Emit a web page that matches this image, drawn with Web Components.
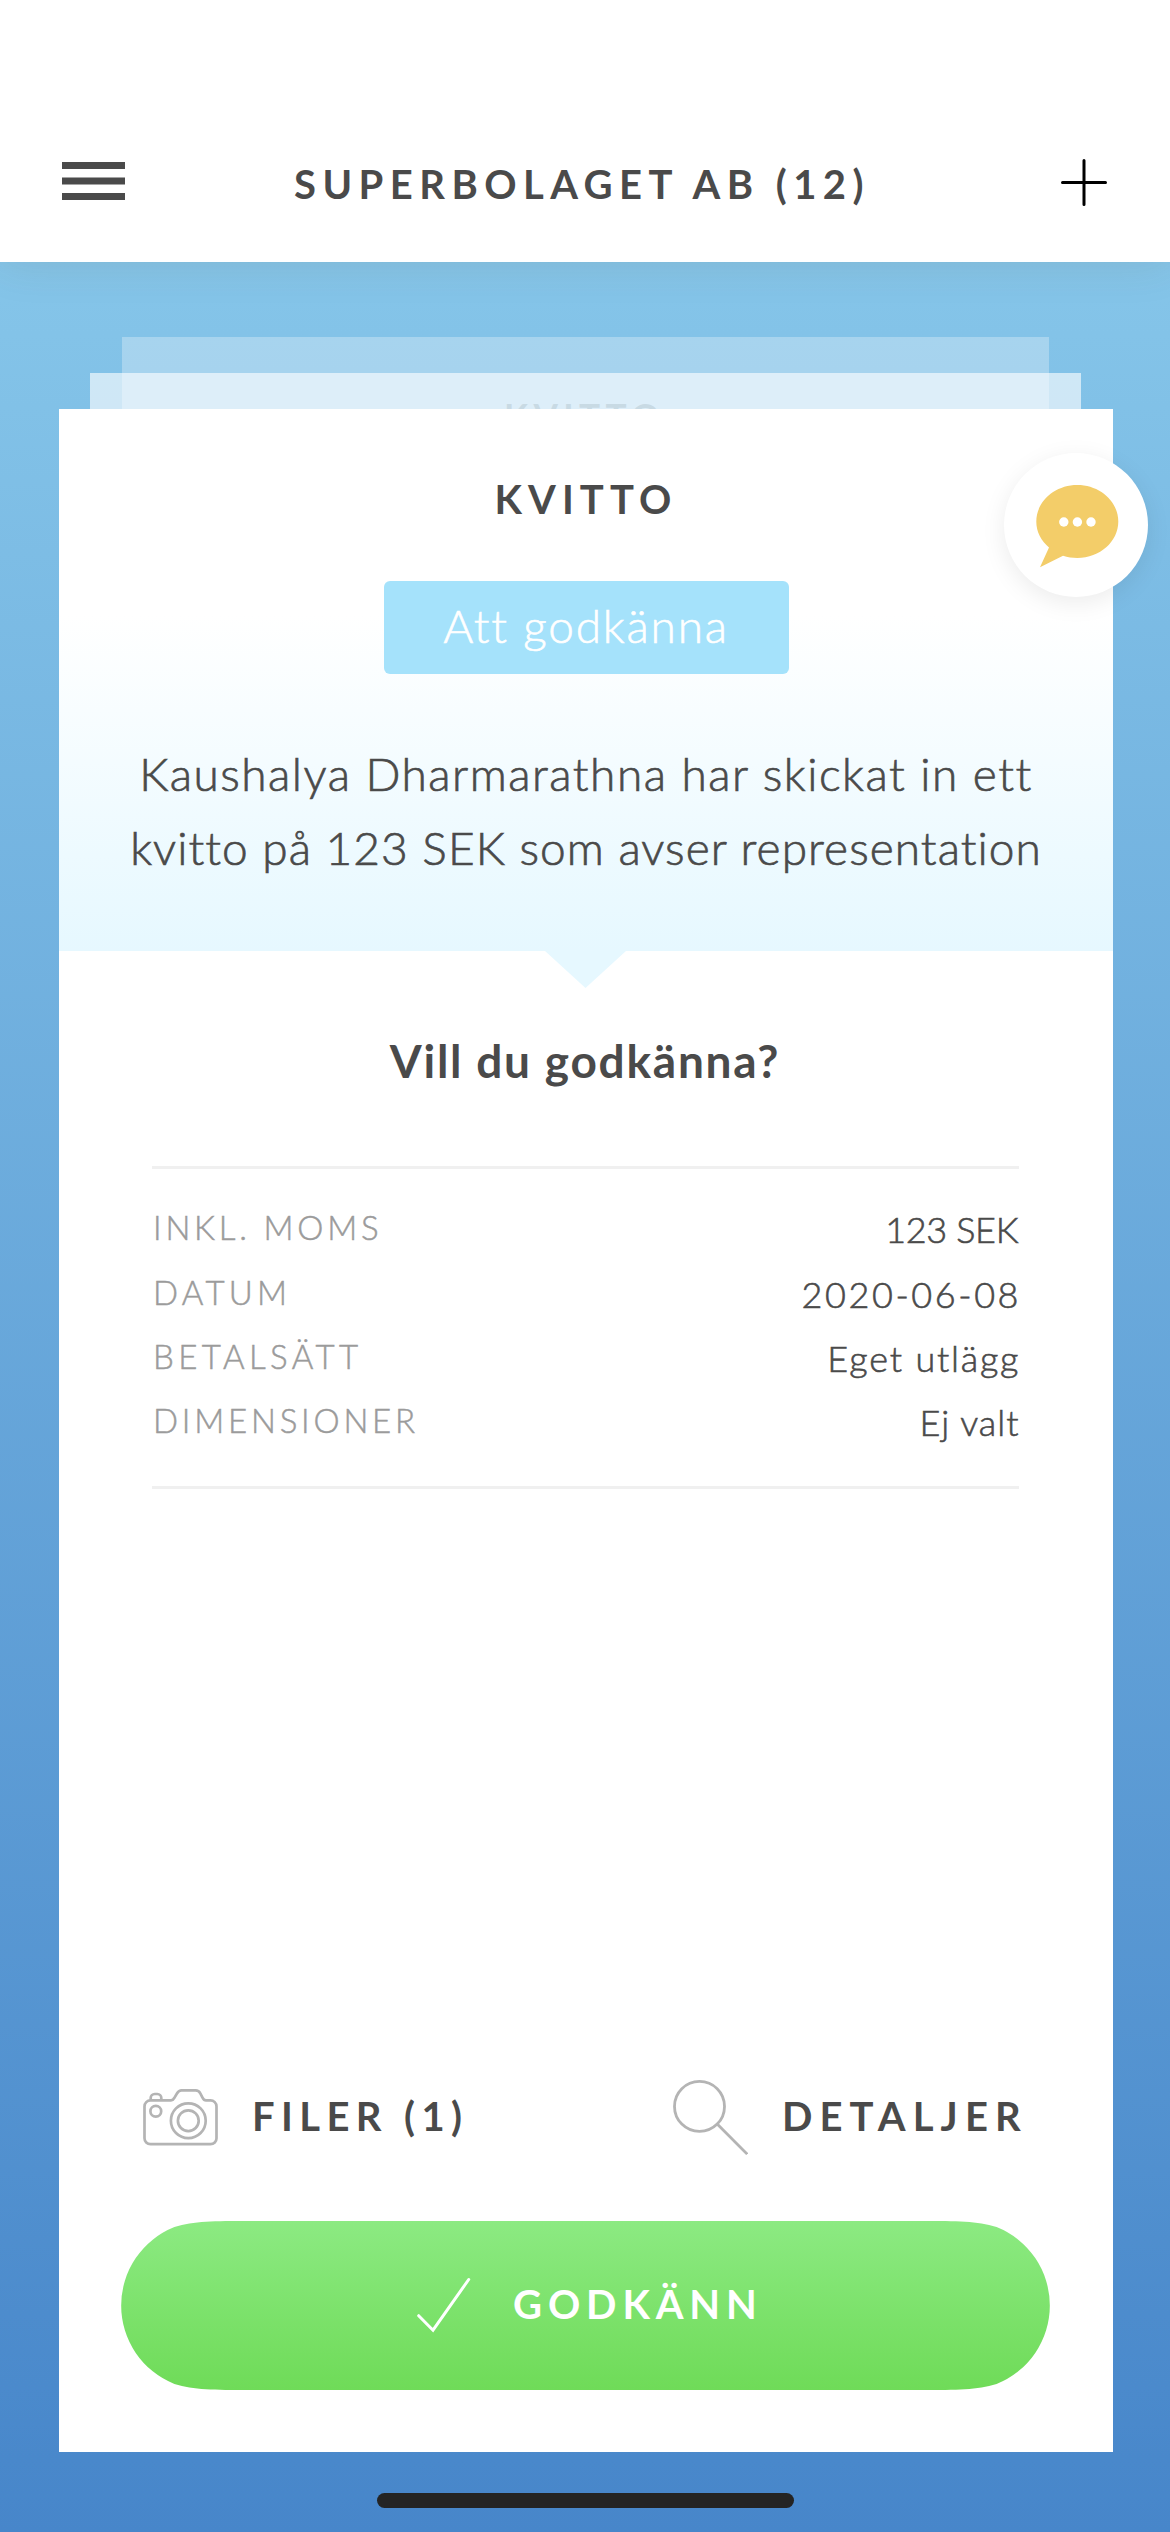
<!DOCTYPE html>
<html lang="sv">
<head>
<meta charset="utf-8">
<title>Superbolaget AB</title>
<style>
  body { margin: 0; font-family: Lato, "Open Sans", sans-serif; color: #4a4a4a; }
</style>
</head>
<body>
<receipt-app></receipt-app>

<script>
const define = (name, html) => {
  const template = document.createElement('template');
  template.innerHTML = html;
  customElements.define(name, class extends HTMLElement {
    constructor() {
      super();
      this.attachShadow({ mode: 'open' }).append(template.content.cloneNode(true));
    }
  });
};

define('app-header', `
  <style>
    :host { display: grid; grid-template-columns: 1fr auto 1fr; align-items: center; box-sizing: border-box;
      height: 262px; padding: 104px 63px 0 62px; background: #fff; position: relative; z-index: 1;
      box-shadow: 0 0 42px rgba(90, 70, 50, .13); }
    h1 { margin: 1px 5px 0 0; font-size: 40px; line-height: 48px; font-weight: 700; letter-spacing: 6.45px; white-space: nowrap; }
    svg { display: block; }
    .menu { margin-bottom: 4px; }
    .add { justify-self: end; margin-bottom: 1px; }
  </style>
  <svg class="menu" width="63" height="38" viewBox="0 0 63 38" fill="#4a4a4a">
    <path d="M0 0h63v7H0zM0 15.500h63v7H0zM0 31h63v7H0z"/>
  </svg>
  <h1><slot></slot></h1>
  <svg class="add" width="46" height="47" viewBox="0 0 46 47" stroke="#000" stroke-width="3" stroke-linecap="round">
    <path d="M1.500 23.500h43M23 1.500v44"/>
  </svg>`);

define('status-pill', `
  <style>
    :host { display: flex; align-items: center; justify-content: center; box-sizing: border-box; width: 405px; height: 93px;
      padding-bottom: 4px; border-radius: 6px; background: #a5e2fb; color: #fff;
      font-size: 46px; font-weight: 300; letter-spacing: 1.8px; white-space: nowrap; -webkit-text-stroke: .6px #fff; }
  </style>
  <span><slot></slot></span>`);

define('card-summary', `
  <style>
    :host { display: flex; flex-direction: column; align-items: center; box-sizing: border-box; height: 542px; padding-top: 66px;
      background: linear-gradient(#fff 38%, #e6f8ff); position: relative; }
    :host::after { content: ""; position: absolute; top: 100%; left: 486px; width: 81px; height: 37px;
      background: #e6f8ff; clip-path: polygon(0 0, 100% 0, 50% 100%); }
    h2 { margin: 0 0 58px; font-size: 40px; line-height: 48px; font-weight: 700; letter-spacing: 6.08px; }
    p { margin: 63px 0 0; display: flex; flex-direction: column; align-items: center; font-size: 46px; line-height: 74px;
      font-weight: 300; white-space: nowrap; -webkit-text-stroke: .7px #4a4a4a; }
    .first { letter-spacing: 1.5px; }
    .second { letter-spacing: 1.05px; }
  </style>
  <h2><slot name="title"></slot></h2>
  <slot name="status"></slot>
  <p><span class="first"><slot name="line-1"></slot></span><span class="second"><slot name="line-2"></slot></span></p>`);

define('detail-row', `
  <style>
    :host { display: flex; justify-content: space-between; align-items: center; height: 64.400px; }
    .label { font-size: 33px; line-height: 40px; font-weight: 300; color: #9b9b9b; padding: 0 0 4px 1px;
      letter-spacing: var(--label-spacing, 3.8px); -webkit-text-stroke: .5px #9b9b9b; }
    .value { font-size: 36px; line-height: 44px; font-weight: 300; letter-spacing: var(--value-spacing, 1px);
      margin-right: calc(.5px - var(--value-spacing, 1px)); -webkit-text-stroke: .6px #4a4a4a; }
  </style>
  <span class="label"><slot name="label"></slot></span>
  <span class="value"><slot></slot></span>`);

define('detail-list', `
  <style>
    :host { display: block; box-sizing: border-box; height: 323px; margin: 78px 94px 0 93px; padding-top: 28px;
      border-top: 3px solid #f0f0f0; border-bottom: 3px solid #f0f0f0; }
  </style>
  <slot></slot>`);

define('action-link', `
  <style>
    :host { display: flex; align-items: center; font-size: 40px; line-height: 48px; font-weight: 700;
      letter-spacing: var(--spacing, 6.4px); white-space: nowrap; }
    span { margin: 0 0 3px 34px; }
  </style>
  <slot name="icon"></slot><span><slot></slot></span>`);

define('camera-icon', `
  <style>:host { display: block; height: 76px; } svg { display: block; }</style>
  <svg width="75" height="76" viewBox="0 0 75 76" fill="none" stroke="#b4b4b4" stroke-width="2.700">
    <path d="M7.500 21.400H28c2 0 2.600-1.200 3.500-2.800l2.600-4.300c1.200-2 2.300-2.900 4.500-2.900h14c2.400 0 3.700 1 4.700 2.900l2.200 4.300c.9 1.800 1.500 2.800 3.500 2.800h4.500a6 6 0 0 1 6 6v31.800a6 6 0 0 1-6 6h-60a6 6 0 0 1-6-6V27.400a6 6 0 0 1 6-6z"/>
    <path d="M7.700 21v-2a4 4 0 0 1 4-4h2.600a4 4 0 0 1 4 4v2"/>
    <circle cx="12.800" cy="32.300" r="5.400"/>
    <circle cx="45.300" cy="41.700" r="17.400"/>
    <circle cx="45.300" cy="41.700" r="10.400"/>
  </svg>`);

define('search-icon', `
  <style>:host { display: block; height: 76px; } svg { display: block; }</style>
  <svg width="75" height="76" viewBox="0 0 75 76" fill="none" stroke="#b4b4b4" stroke-width="2.800">
    <circle cx="26.500" cy="27.400" r="25"/>
    <path d="M44.200 45.100l30 30"/>
  </svg>`);

define('approve-button', `
  <style>
    :host { display: grid; width: 929px; height: 169px; margin-left: 62px; }
    svg, .content { grid-area: 1 / 1; }
    .content { display: flex; align-items: center; gap: 42px; padding-left: 296px; color: #fff; font-size: 40px;
      line-height: 48px; font-weight: 700; letter-spacing: 5.87px; }
    .check { margin-bottom: 2px; }
    span { margin-bottom: 4px; }
  </style>
  <svg width="929" height="169" viewBox="0 0 929 169">
    <defs><linearGradient id="g" x1="0" y1="0" x2="0" y2="1"><stop offset="0" stop-color="#8cea82"/><stop offset="1" stop-color="#6fdb58"/></linearGradient></defs>
    <path fill="url(#g)" d="M129 0H800C837 0 855.600 0 875.600 6A84.500 84.500 0 0 1 875.600 163C855.600 169 837 169 800 169H129C92 169 73.400 169 53.400 163A84.500 84.500 0 0 1 53.400 6C73.400 0 92 0 129 0Z"/>
  </svg>
  <div class="content">
    <svg class="check" width="54" height="56" viewBox="0 0 54 56" fill="none" stroke="#fff" stroke-width="3" stroke-linecap="round">
      <path d="M1.700 38.700l14.300 14.500L51.700 2.500"/>
    </svg>
    <span><slot></slot></span>
  </div>`);

define('receipt-card', `
  <style>
    :host { display: flex; flex-direction: column; box-sizing: border-box; height: 2043px; background: #fff; padding-bottom: 62px; }
    h3 { margin: 83px 2px 0 0; font-size: 46px; line-height: 54px; font-weight: 700; letter-spacing: 1.76px; text-align: center; }
    .actions { display: grid; grid-template-columns: 530px auto; margin: auto 0 66px 84px; }
  </style>
  <slot name="summary"></slot>
  <h3><slot name="question"></slot></h3>
  <slot></slot>
  <div class="actions"><slot name="action"></slot></div>
  <slot name="button"></slot>`);

define('queued-card', `
  <style>
    :host { display: block; box-sizing: border-box; align-self: start; overflow: hidden; background: #fff; text-align: center;
      font-size: 35.200px; line-height: 42px; font-weight: 700; letter-spacing: 5.350px; padding: 57px 2px 0 0; }
  </style>
  <slot></slot>`);

define('chat-bubble', `
  <style>
    :host { display: block; position: absolute; left: 1003.500px; top: 453px; width: 144px; height: 144px; border-radius: 50%;
      background: #fff; box-shadow: 0 6px 24px rgba(0, 0, 0, .08); z-index: 2; }
    svg { display: block; }
  </style>
  <svg width="144" height="144" viewBox="0 0 144 144">
    <path fill="#f3cd69" d="M73.300 32C96 32 114.300 48.500 114.300 68.600S96 105 73.300 105C68.500 105 63.600 104.300 59 102.800L36 114.200L45 94.500C37 88 32.300 78.800 32.300 68.600C32.300 48.500 50.600 32 73.300 32Z"/>
    <g fill="#fff"><circle cx="59.800" cy="69" r="4.700"/><circle cx="73.400" cy="69" r="4.700"/><circle cx="87" cy="69" r="4.700"/></g>
  </svg>`);

define('home-indicator', `
  <style>:host { display: block; width: 417px; height: 15px; border-radius: 7.500px; background: #242424; margin: 41px 0 0 377px; }</style>`);

define('receipt-app', `
  <style>
    :host { display: block; position: relative; height: 2532px; overflow: hidden; }
    main { display: grid; height: 2190px; }
    .backdrop { height: 2270px; background: linear-gradient(#85c5e9, #4786ca); }
    main > * { grid-area: 1 / 1; }
    .third { margin: 75px 121px 0 122px; height: 120px; opacity: .29; }
    .second { margin: 111px 89px 0 90px; height: 80px; opacity: .62; }
    .front { margin: 147px 57px 0 59px; z-index: 1; }
  </style>
  <app-header>SUPERBOLAGET AB (12)</app-header>
  <div class="backdrop">
    <main>
      <queued-card class="third">KVITTO</queued-card>
      <queued-card class="second"></queued-card>
      <receipt-card class="front">
        <card-summary slot="summary">
          <span slot="title">KVITTO</span>
          <status-pill slot="status">Att godkänna</status-pill>
          <span slot="line-1">Kaushalya Dharmarathna har skickat in ett</span>
          <span slot="line-2">kvitto på 123 SEK som avser representation</span>
        </card-summary>
        <span slot="question">Vill du godkänna?</span>
        <detail-list>
          <detail-row style="--label-spacing:3.79px;--value-spacing:-.34px"><span slot="label">INKL. MOMS</span>123 SEK</detail-row>
          <detail-row style="--label-spacing:4.26px;--value-spacing:2.58px"><span slot="label">DATUM</span>2020-06-08</detail-row>
          <detail-row style="--label-spacing:4.39px;--value-spacing:1.79px"><span slot="label">BETALSÄTT</span>Eget utlägg</detail-row>
          <detail-row style="--label-spacing:3.79px;--value-spacing:.98px"><span slot="label">DIMENSIONER</span>Ej valt</detail-row>
        </detail-list>
        <action-link slot="action" style="--spacing:6.39px"><camera-icon slot="icon"></camera-icon>FILER (1)</action-link>
        <action-link slot="action" style="--spacing:7.09px"><search-icon slot="icon"></search-icon>DETALJER</action-link>
        <approve-button slot="button">GODKÄNN</approve-button>
      </receipt-card>
    </main>
    <home-indicator></home-indicator>
  </div>
  <chat-bubble></chat-bubble>`);
</script>
</body>
</html>
